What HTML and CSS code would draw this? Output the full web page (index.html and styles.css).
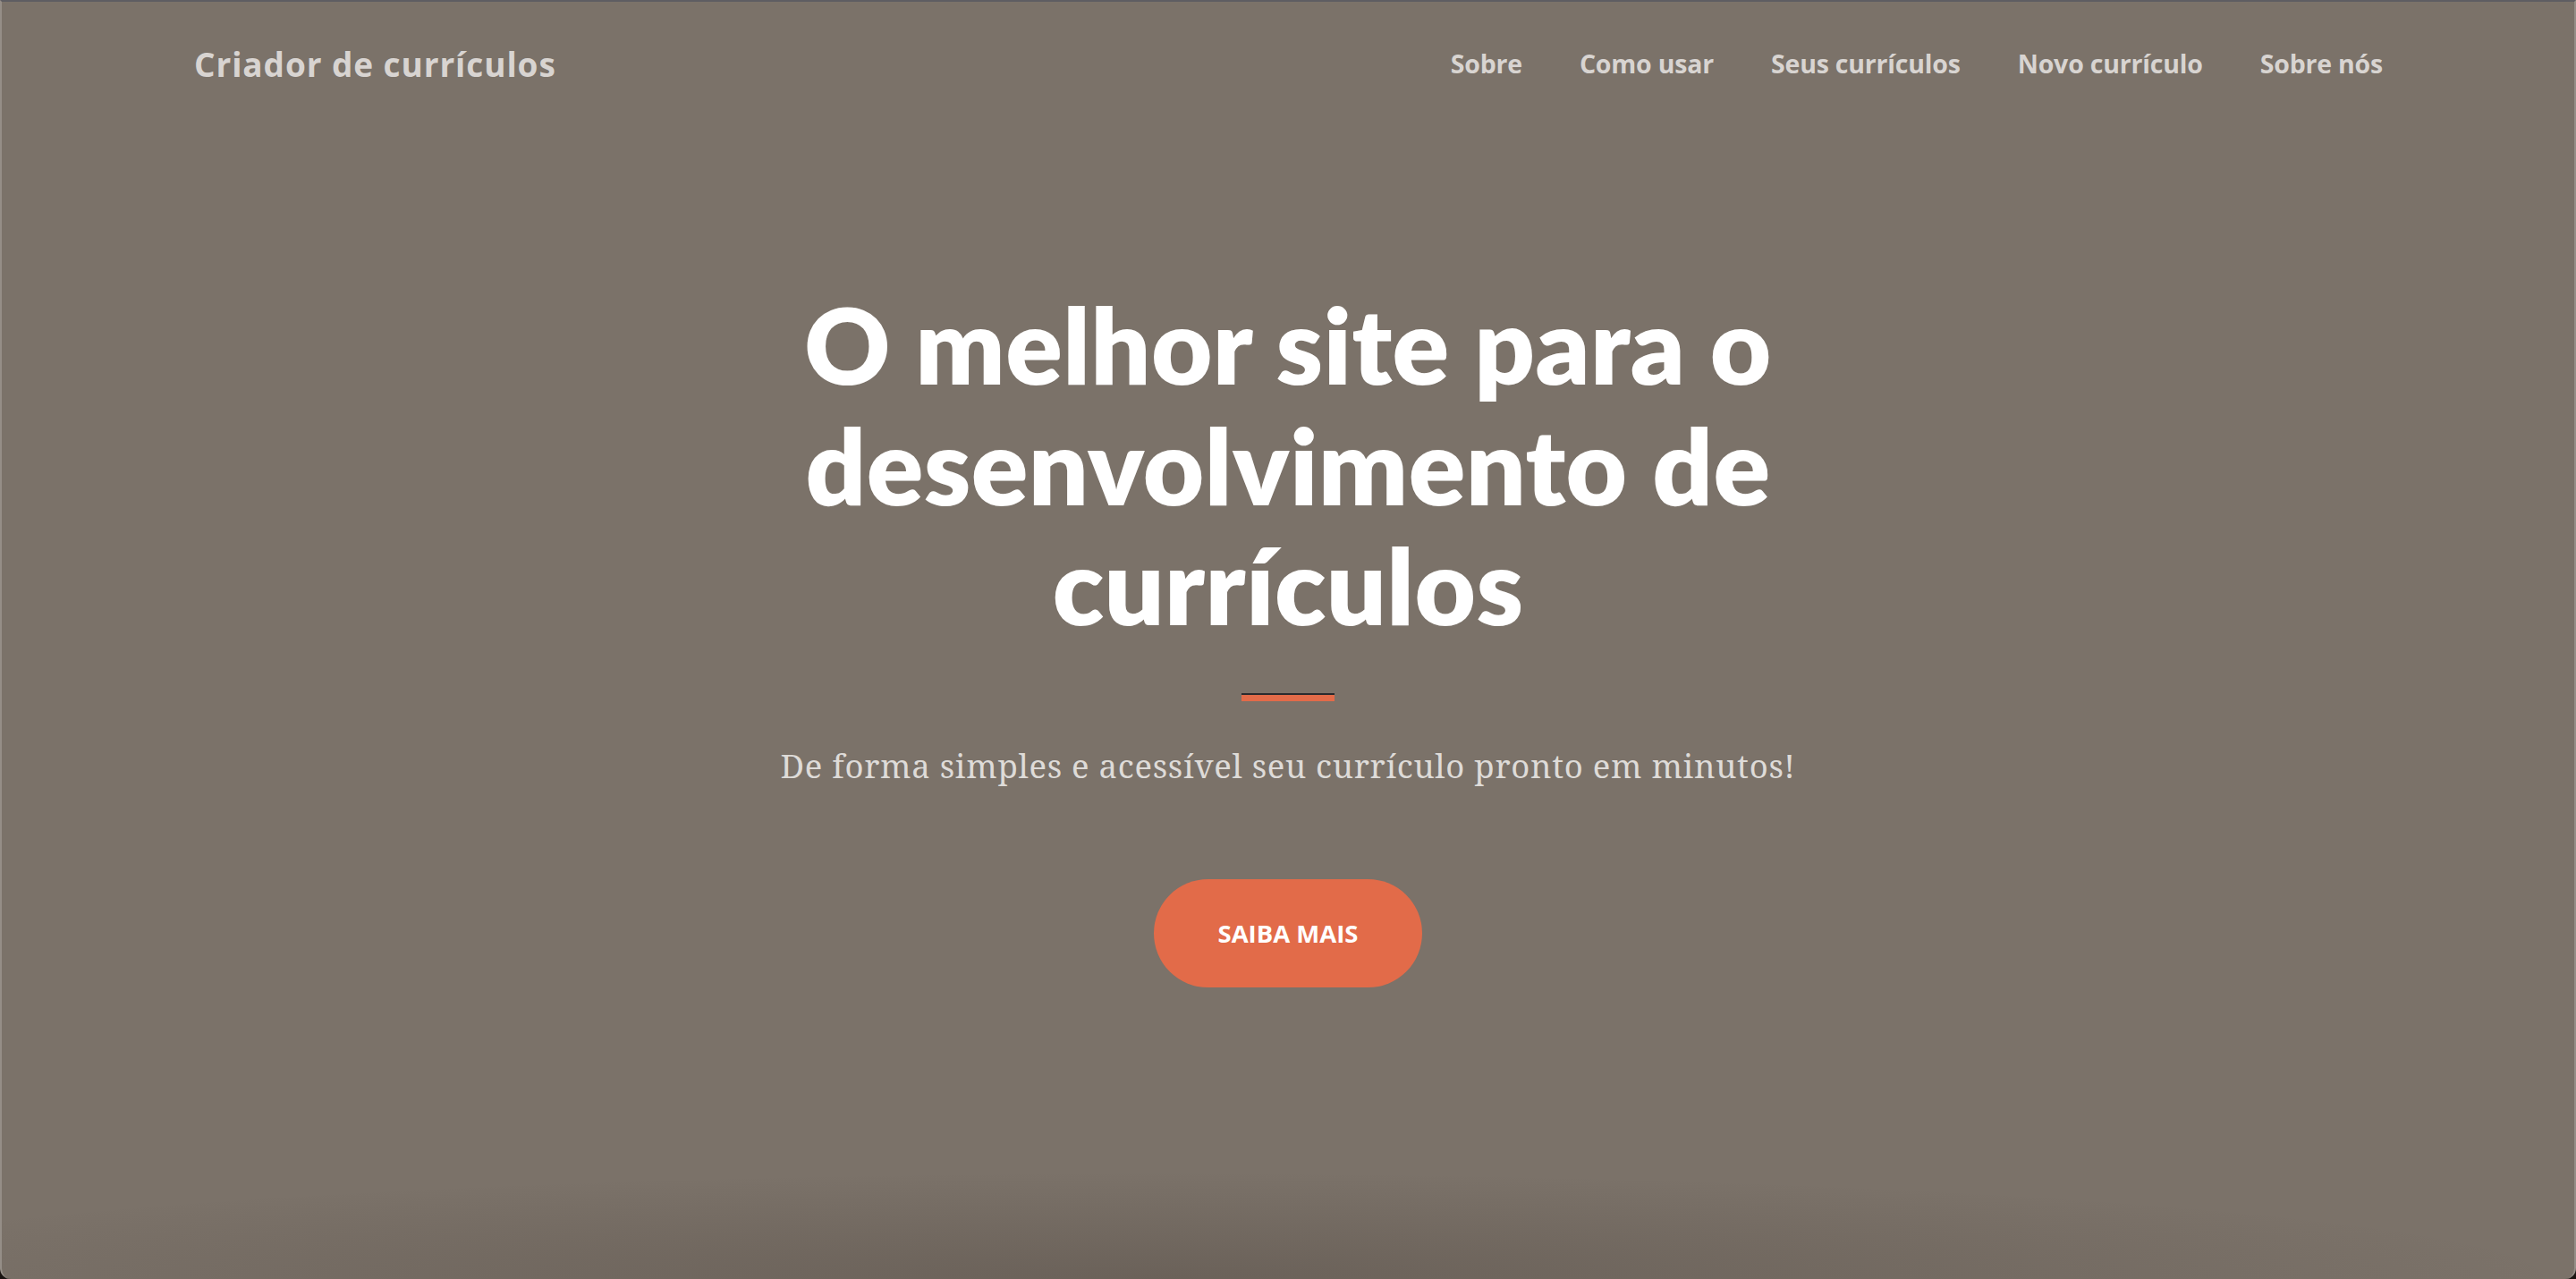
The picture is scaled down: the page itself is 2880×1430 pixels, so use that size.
FILE: index.html
```html
<!DOCTYPE html>
<html lang="pt-BR">
<head>
<meta charset="utf-8">
<title>Criador de currículos</title>
<link rel="stylesheet" href="styles.css">
</head>
<body>
<div class="window">
  <nav class="navbar">
    <a class="brand" href="#">Criador de currículos</a>
    <ul class="nav-list">
      <li><a href="#">Sobre</a></li>
      <li><a href="#">Como usar</a></li>
      <li><a href="#">Seus currículos</a></li>
      <li><a href="#">Novo currículo</a></li>
      <li><a href="#">Sobre nós</a></li>
    </ul>
  </nav>
  <header class="masthead">
    <h1 class="title">O melhor site para o<br>desenvolvimento de<br>currículos</h1>
    <hr class="divider">
    <p class="lead">De forma simples e acessível seu currículo pronto em minutos!</p>
    <a class="btn" href="#">Saiba mais</a>
  </header>
</div>
</body>
</html>
```

FILE: styles.css
```css
html, body {
  margin: 0;
  padding: 0;
  background: #1a1411;
}
.window {
  position: relative;
  box-sizing: border-box;
  height: 1430px;
  background: #7b7269;
  border-top: 2px solid #5e5d62;
  border-left: 2px solid #958e87;
  border-right: 2px solid #958e87;
  border-radius: 0 0 12px 12px;
  overflow: hidden;
  font-family: "Open Sans", Lato, sans-serif;
}
.window::after {
  content: "";
  position: absolute;
  left: 0;
  right: 0;
  bottom: 0;
  height: 120px;
  background: radial-gradient(ellipse 55% 100% at 45% 100%, rgba(40, 30, 25, 0.2), rgba(40, 30, 25, 0) 100%);
  pointer-events: none;
}
.navbar {
  display: flex;
  justify-content: space-between;
  align-items: center;
  height: 138px;
  padding: 0 214px 0 215px;
}
.brand {
  color: #d8d4d1;
  font-weight: 700;
  font-size: 37px;
  letter-spacing: 0.9px;
  text-decoration: none;
}
.nav-list {
  display: flex;
  gap: 64px;
  list-style: none;
  margin: 0;
  padding: 0;
}
.nav-list a {
  color: #d8d4d1;
  font-weight: 700;
  font-size: 28.5px;
  letter-spacing: -0.2px;
  text-decoration: none;
}
.masthead {
  display: flex;
  flex-direction: column;
  align-items: center;
  text-align: center;
  padding-top: 178px;
}
.title {
  margin: 0;
  color: #ffffff;
  font-family: Lato, "Open Sans", sans-serif;
  font-weight: 800;
  font-size: 118px;
  line-height: 134.5px;
  letter-spacing: 0.4px;
}
.divider {
  box-sizing: border-box;
  width: 104px;
  height: 9px;
  margin: 53px 0 0;
  border: 0;
  border-top: 2px solid #2a2a2e;
  background: #e26b49;
}
.lead {
  margin: 47px 0 0;
  color: #dedbd8;
  font-family: "Noto Serif", "DejaVu Serif", serif;
  font-size: 36.5px;
  letter-spacing: 0.7px;
}
.btn {
  margin-top: 102px;
  display: inline-block;
  padding: 40px 72px;
  border-radius: 320px;
  background: #e26b49;
  color: #ffffff;
  font-weight: 700;
  font-size: 27.5px;
  line-height: 41px;
  text-transform: uppercase;
  text-decoration: none;
}
```
